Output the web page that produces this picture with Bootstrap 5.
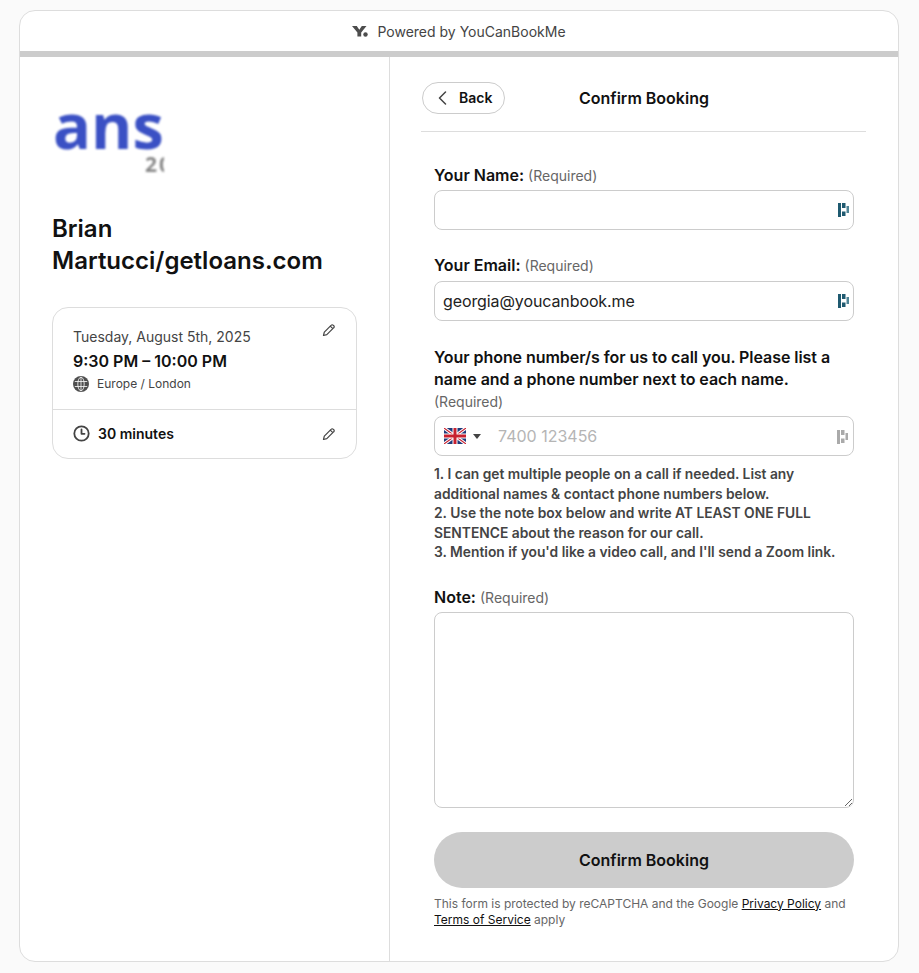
<!DOCTYPE html>
<html lang="en">

<head>
    <meta charset="UTF-8">
    <meta name="viewport" content="width=device-width, initial-scale=1.0">
    <title>Confirm Booking</title>
    <link rel="stylesheet" href="https://cdn.jsdelivr.net/npm/bootstrap@5.3.0/dist/css/bootstrap.min.css">
    <style>
        body { background: #fafafa; font-family: Inter, "Liberation Sans", sans-serif; color: #111; padding: 10px 20px 11px 19px; }
        .shell { background: #fff; border: 1px solid #ddd; border-radius: 16px; height: 952px; overflow: hidden; }
        .powered { height: 40px; font-size: 14px; color: #444; gap: 9px; }
        .band { height: 6px; background: #ccc; }
        .side { width: 370px; flex: none; border-right: 1px solid #ddd; padding: 43px 32px 0 32px; }
        .logo-box { width: 120px; height: 84px; }
        .logo-text { font-family: "Open Sans", sans-serif; font-weight: 700; font-size: 63px; line-height: 56px; color: #3a50c4; margin: -3px 0 0 1px; filter: blur(.8px); }
        .logo-sub { font-family: "Open Sans", sans-serif; font-weight: 700; font-size: 21px; line-height: 20px; letter-spacing: 2px; color: #888; width: 19px; overflow: hidden; margin: 1px 0 0 93px; filter: blur(.8px); }
        .host { font-size: 24px; line-height: 32px; font-weight: 600; margin: 32px 0 30px; }
        .slot-card { border: 1px solid #ddd; border-radius: 16px; }
        .slot-top { padding: 19px 20px 16px; height: 102px; border-bottom: 1px solid #ddd; }
        .slot-date { font-size: 14px; line-height: 20px; color: #444; }
        .slot-time { font-size: 16px; line-height: 24px; font-weight: 600; margin-top: 2px; }
        .slot-zone { font-size: 12px; line-height: 20px; color: #444; gap: 8px; margin-top: 1px; }
        .slot-edit { margin-top: -4px; }
        .slot-bottom { height: 48px; padding: 0 20px 1px; font-size: 14px; font-weight: 600; gap: 8px; }
        .main-col { padding: 24px 32px 0; }
        .head-row { display: grid; grid-template-columns: 1fr auto 1fr; align-items: center; height: 33px; margin-bottom: 17px; }
        .back-btn { width: 83px; height: 32px; border: 1px solid #ccc; border-radius: 16px; background: #fff; font-size: 14px; font-weight: 600; color: #111; gap: 12px; padding: 0 0 0 15px; }
        .head-title { font-size: 16px; font-weight: 600; }
        .head-line { border-top: 1px solid #ddd; margin-bottom: 33px; margin-left: -1px; }
        .form-body { padding: 0 12px; }
        .field-label { font-size: 16px; line-height: 20px; font-weight: 600; margin-bottom: 5px; display: block; }
        .field-label span { font-size: 14px; font-weight: 400; color: #666; }
        .first-label { margin-bottom: 4px; }
        .field-box { position: relative; margin-bottom: 25px; }
        .field-box .form-control { height: 40px; border: 1px solid #ccc; border-radius: 8px; padding: 0 8px; font-size: 16px; letter-spacing: -.1px; color: #222; box-shadow: none; }
        .pw-mark { position: absolute; right: 5px; top: 13px; }
        .phone-label { font-size: 16px; line-height: 22px; font-weight: 600; letter-spacing: -.05px; }
        .phone-req { font-size: 14px; line-height: 22px; color: #666; margin: 1px 0 3px; }
        .phone-wrap { height: 40px; border: 1px solid #ccc; border-radius: 8px; position: relative; padding-left: 9px; }
        .phone-caret { width: 0; height: 0; border-left: 4px solid transparent; border-right: 4px solid transparent; border-top: 5px solid #444; margin: 1px 0 0 7px; }
        .phone-hint { color: #b5b5b5; font-size: 16px; margin-left: 17px; }
        .help-text { font-size: 13.8px; line-height: 19.5px; font-weight: 600; color: #444; margin: 9px 0 24px; }
        .note-box { height: 196px !important; margin-bottom: 24px; border: 1px solid #ccc; border-radius: 8px; box-shadow: none; }
        .confirm-btn { height: 56px; border-radius: 28px; border: 0; background: #ccc; color: #111; font-size: 16px; font-weight: 600; }
        .legal { font-size: 12px; line-height: 16px; color: #666; margin-top: 8px; }
        .legal a { color: #111; }
    </style>
</head>

<body>
    <div class="shell d-flex flex-column">
        <div class="powered d-flex align-items-center justify-content-center">
            <svg width="16" height="12" viewBox="0 0 16 12"><path d="M0 1h4.800L7.300 4.800 9.800 1H14.500L9.200 7.600V11.500H5.400V7.600Z" fill="#4d4d4d"/><circle cx="13.500" cy="9.500" r="2.200" fill="#4d4d4d"/></svg>
            <span>Powered by YouCanBookMe</span>
        </div>
        <div class="band"></div>

        <div class="d-flex flex-grow-1">
            <!-- left summary -->
            <div class="side">
                <div class="logo-box">
                    <div class="logo-text">ans</div>
                    <div class="logo-sub">20</div>
                </div>
                <div class="host">Brian Martucci/getloans.com</div>
                <div class="slot-card">
                    <div class="slot-top d-flex justify-content-between">
                        <div>
                            <div class="slot-date">Tuesday, August 5th, 2025</div>
                            <div class="slot-time">9:30 PM – 10:00 PM</div>
                            <div class="slot-zone d-flex align-items-center">
                                <svg width="16" height="16" viewBox="0 0 16 16"><circle cx="8" cy="8" r="8" fill="#4f4f4f"/><g fill="none" stroke="#fff" stroke-width=".8"><ellipse cx="8" cy="8" rx="3.200" ry="6.800"/><path d="M8 1.200v13.600M1.800 5.500h12.400M1.800 10.500h12.400"/></g></svg>
                                <span>Europe / London</span>
                            </div>
                        </div>
                        <svg class="slot-edit" width="14" height="14" viewBox="0 0 14 14" fill="none" stroke="#444" stroke-width="1.200" stroke-linejoin="round"><path d="M1.500 12.500l.8-3.300 7-7a1.300 1.300 0 0 1 1.900 0l.6.6a1.300 1.300 0 0 1 0 1.900l-7 7ZM8.300 3.200l2.500 2.500"/></svg>
                    </div>
                    <div class="slot-bottom d-flex align-items-center">
                        <svg width="17" height="17" viewBox="0 0 17 17" fill="none" stroke="#444" stroke-width="1.800"><circle cx="8.500" cy="8.500" r="7.200"/><path d="M8.500 4.500v4.300h3" stroke-linecap="round" stroke-linejoin="round"/></svg>
                        <span class="flex-grow-1">30 minutes</span>
                        <svg width="14" height="14" viewBox="0 0 14 14" fill="none" stroke="#444" stroke-width="1.200" stroke-linejoin="round"><path d="M1.500 12.500l.8-3.300 7-7a1.300 1.300 0 0 1 1.900 0l.6.6a1.300 1.300 0 0 1 0 1.900l-7 7ZM8.300 3.200l2.500 2.500"/></svg>
                    </div>
                </div>
            </div>

            <!-- right form -->
            <div class="main-col flex-grow-1">
                <div class="head-row">
                    <button class="back-btn d-flex align-items-center" type="button">
                        <svg width="9" height="14" viewBox="0 0 9 14" fill="none" stroke="#444" stroke-width="1.500" stroke-linecap="round" stroke-linejoin="round"><path d="M7.500 1 1.500 7l6 6"/></svg>
                        <span>Back</span>
                    </button>
                    <div class="head-title">Confirm Booking</div>
                    <div></div>
                </div>
                <div class="head-line"></div>

                <form class="form-body">
                    <label class="field-label first-label">Your Name: <span>(Required)</span></label>
                    <div class="field-box">
                        <input type="text" class="form-control">
                        <svg class="pw-mark" width="11" height="14" viewBox="0 0 11 14"><path d="M0 0h3v14H0ZM4 0h3.500v5H4ZM4 8.500h3.500V13H4Z" fill="#1f5a70"/><path d="M8.500 3H11v7H8.500Z" fill="#4f8496"/></svg>
                    </div>
                    <label class="field-label">Your Email: <span>(Required)</span></label>
                    <div class="field-box">
                        <input type="text" class="form-control" value="georgia@youcanbook.me">
                        <svg class="pw-mark" width="11" height="14" viewBox="0 0 11 14"><path d="M0 0h3v14H0ZM4 0h3.500v5H4ZM4 8.500h3.500V13H4Z" fill="#1f5a70"/><path d="M8.500 3H11v7H8.500Z" fill="#4f8496"/></svg>
                    </div>

                    <div class="phone-label">Your phone number/s for us to call you. Please list a name and a phone number next to each name.</div>
                    <div class="phone-req">(Required)</div>
                    <div class="phone-wrap d-flex align-items-center">
                        <svg width="22" height="16" viewBox="0 0 22 16">
                            <rect width="22" height="16" fill="#1f3a7a"/>
                            <path d="M0 0l22 16M22 0L0 16" stroke="#fff" stroke-width="3.200"/>
                            <path d="M0 0l22 16M22 0L0 16" stroke="#c8202f" stroke-width="1.100"/>
                            <path d="M11 0v16M0 8h22" stroke="#fff" stroke-width="5"/>
                            <path d="M11 0v16M0 8h22" stroke="#c8202f" stroke-width="3"/>
                        </svg>
                        <span class="phone-caret"></span>
                        <span class="phone-hint">7400 123456</span>
                        <svg class="pw-mark" width="11" height="14" viewBox="0 0 11 14"><path d="M0 0h3v14H0ZM4 0h3.500v5H4ZM4 8.500h3.500V13H4ZM8.500 3H11v7H8.500Z" fill="#aaa"/></svg>
                    </div>
                    <div class="help-text">1. I can get multiple people on a call if needed. List any additional names &amp; contact phone numbers below.<br>2. Use the note box below and write AT LEAST ONE FULL SENTENCE about the reason for our call.<br>3. Mention if you'd like a video call, and I'll send a Zoom link.</div>

                    <label class="field-label first-label">Note: <span>(Required)</span></label>
                    <textarea class="form-control note-box"></textarea>

                    <button class="confirm-btn w-100" type="button">Confirm Booking</button>
                    <div class="legal">This form is protected by reCAPTCHA and the Google <a href="#">Privacy Policy</a> and <a href="#">Terms of Service</a> apply</div>
                </form>
            </div>
        </div>
    </div>
    <script src="https://cdn.jsdelivr.net/npm/bootstrap@5.3.0/dist/js/bootstrap.bundle.min.js"></script>
</body>

</html>
